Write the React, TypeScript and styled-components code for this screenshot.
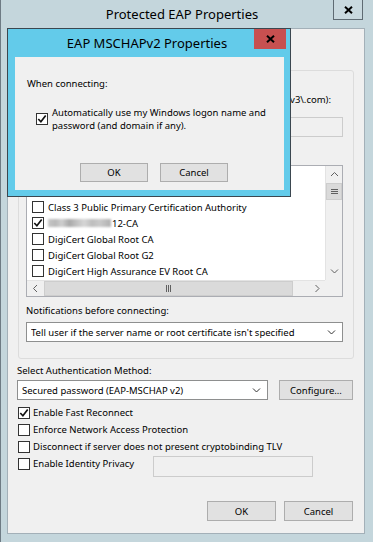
import React from 'react';
import styled, { createGlobalStyle } from 'styled-components';

const Global = createGlobalStyle`
  html, body { margin: 0; padding: 0; }
  body {
    font-family: "Noto Sans", "DejaVu Sans", sans-serif;
    font-size: 9.5px;
    color: #000;
    background: #c4d6dc;
  }
  * { box-sizing: border-box; }
`;

const Window = styled.div`
  position: relative;
  width: 373px;
  height: 542px;
  background: #c4d6dc;
  border-left: 1px solid #6e7b84;
  display: flex;
  flex-direction: column;
  overflow: hidden;
`;

const TitleBar = styled.div<{ $h: number; $pr: number }>`
  display: grid;
  grid-template-columns: 1fr auto 1fr;
  height: ${p => p.$h}px;
  padding-right: ${p => p.$pr}px;
  flex: none;
`;

const TitleText = styled.div`
  grid-column: 2;
  align-self: center;
  font-size: 13px;
  white-space: nowrap;
  color: #000;
`;

const Caption = styled.div<{ $w: number; $bg: string; $border: string }>`
  grid-column: 3;
  justify-self: end;
  align-self: start;
  width: ${p => p.$w}px;
  height: 20px;
  background: ${p => p.$bg};
  border: 1px solid ${p => p.$border};
  border-top: none;
  display: flex;
  align-items: center;
  justify-content: center;
`;

const Client = styled.div`
  flex: 1;
  margin: 0 8px 8px 6px;
  background: #f0f0f0;
  border: 1px solid #a3b0b8;
  display: flex;
  flex-direction: column;
`;

const GroupBox = styled.div`
  margin: 41px 0 0 10px;
  width: 336px;
  height: 289px;
  border: 1px solid #dcdcdc;
  border-radius: 3px;
  padding: 0 10px 0 7px;
  display: flex;
  flex-direction: column;
`;

const Label = styled.div<{ $mt: number; $pl?: number; $right?: number }>`
  margin-top: ${p => p.$mt}px;
  height: 14px;
  line-height: 14px;
  padding-left: ${p => p.$pl ?? 0}px;
  white-space: nowrap;
  ${p => (p.$right !== undefined ? `text-align: right; padding-right: ${p.$right}px;` : '')}
`;

const Spacer = styled.div<{ $mt: number; $h: number }>`
  margin-top: ${p => p.$mt}px;
  height: ${p => p.$h}px;
`;

const TextField = styled.div<{ $mt: number; $h: number }>`
  margin-top: ${p => p.$mt}px;
  height: ${p => p.$h}px;
  background: #f0f0f0;
  border: 1px solid #cccccc;
`;

const ListBox = styled.div`
  margin-top: 8px;
  height: 132px;
  border: 1px solid #abadb3;
  background: #fff;
  display: grid;
  grid-template-columns: 1fr 17px;
  grid-template-rows: 114px 16px;
`;

const Rows = styled.div`
  padding: 1px 0 0 5px;
  overflow: hidden;
  display: flex;
  flex-direction: column;
`;

const Row = styled.div`
  height: 16px;
  display: flex;
  align-items: center;
  gap: 4px;
  white-space: nowrap;
  flex: none;
`;

const Box = styled.span`
  width: 12px;
  height: 12px;
  flex: none;
  border: 1px solid #333;
  background: #fff;
  display: inline-flex;
  align-items: center;
  justify-content: center;
`;

const Blur = styled.span`
  display: inline-block;
  width: 63px;
  height: 8px;
  margin-right: 1px;
  background: linear-gradient(90deg, #c6c6c6 0%, #b9b9b9 12%, #cfcfcf 22%, #a9a9a9 34%, #c2c2c2 46%, #d6d6d6 58%, #bdbdbd 70%, #cacaca 82%, #b0b0b0 100%);
  filter: blur(0.8px);
`;

const VScroll = styled.div`
  background: #f0f0f0;
  border-left: 1px solid #e3e3e3;
  display: flex;
  flex-direction: column;
`;

const ScrollBtn = styled.div<{ $w: number; $h: number }>`
  width: ${p => p.$w}px;
  height: ${p => p.$h}px;
  flex: none;
  display: flex;
  align-items: center;
  justify-content: center;
  background: #f0f0f0;
`;

const Thumb = styled.div<{ $w?: number; $h?: number }>`
  ${p => (p.$w ? `width: ${p.$w}px;` : 'width: 100%;')}
  ${p => (p.$h ? `height: ${p.$h}px;` : 'height: 100%;')}
  flex: none;
  background: #dadada;
  border: 1px solid #cdcdcd;
  display: flex;
  align-items: center;
  justify-content: center;
`;

const Track = styled.div`
  flex: 1;
`;

const HScroll = styled.div`
  background: #f0f0f0;
  border-top: 1px solid #e3e3e3;
  display: flex;
`;

const Corner = styled.div`
  background: #f0f0f0;
`;

const Select = styled.div<{ $mt?: number; $w?: number }>`
  margin-top: ${p => p.$mt ?? 0}px;
  ${p => (p.$w ? `width: ${p.$w}px;` : '')}
  height: 20px;
  background: #fff;
  border: 1px solid #8e8f8f;
  display: flex;
  align-items: center;
  padding: 0 6px 0 4px;
  white-space: nowrap;
  flex: none;
  span { flex: 1; overflow: hidden; }
`;

const AuthRow = styled.div`
  margin-top: 2px;
  padding-left: 9px;
  display: flex;
  gap: 11px;
  height: 20px;
`;

const Button = styled.div<{ $w: number; $h?: number }>`
  width: ${p => p.$w}px;
  height: ${p => p.$h ?? 20}px;
  flex: none;
  background: #e1e1e1;
  border: 1px solid #adadad;
  display: flex;
  align-items: center;
  justify-content: center;
`;

const CheckList = styled.div`
  margin-top: 4px;
  padding-left: 10px;
  display: flex;
  flex-direction: column;
`;

const CheckRow = styled.div`
  height: 17px;
  display: flex;
  align-items: center;
  gap: 3px;
  white-space: nowrap;
`;

const PrivacyRow = styled.div`
  display: grid;
  grid-template-columns: 135px 160px;
  align-items: start;
`;

const ButtonRow = styled.div`
  margin-top: auto;
  margin-bottom: 12px;
  padding-right: 11px;
  display: flex;
  justify-content: flex-end;
  gap: 8px;
`;

const Dialog = styled.div`
  position: absolute;
  left: 6px;
  top: 28px;
  width: 284px;
  height: 169px;
  border: 1px solid #3b4750;
  background: #63cbea;
  display: flex;
  flex-direction: column;
`;

const DialogClient = styled.div`
  flex: 1;
  margin: 0 6px 6px 7px;
  background: #f0f0f0;
  display: flex;
  flex-direction: column;
`;

const DlgLabel = styled.div`
  margin: 20px 0 0 12px;
  height: 14px;
  line-height: 14px;
`;

const DlgCheckRow = styled.div`
  margin: 15px 0 0 21px;
  display: flex;
  align-items: center;
  gap: 4px;
`;

const DlgText = styled.div`
  line-height: 13px;
`;

const DlgButtons = styled.div`
  margin: auto 0 8px 65px;
  display: flex;
  gap: 12px;
`;

const CheckMark = () => (
  <svg width="10" height="10" viewBox="0 0 10 10">
    <polyline points="1.3,5 3.9,7.8 8.7,1.6" fill="none" stroke="#111" strokeWidth="1.7" />
  </svg>
);

const CheckBox = ({ checked }: { checked?: boolean }) => <Box>{checked && <CheckMark />}</Box>;

const CloseX = () => (
  <svg width="9" height="8" viewBox="0 0 9 8">
    <path d="M1 0.8 L8 7.2 M8 0.8 L1 7.2" stroke="#000" strokeWidth="2" />
  </svg>
);

const Chevron = ({ dir, color = '#606060' }: { dir: 'up' | 'down' | 'left' | 'right'; color?: string }) => {
  const pts: Record<string, string> = {
    up: '1,5 4.5,1.5 8,5',
    down: '1,1.5 4.5,5 8,1.5',
    left: '5,1 1.5,4.5 5,8',
    right: '1.5,1 5,4.5 1.5,8',
  };
  const horiz = dir === 'up' || dir === 'down';
  return (
    <svg width={horiz ? 9 : 7} height={horiz ? 7 : 9} viewBox={horiz ? '0 0 9 7' : '0 0 7 9'}>
      <polyline points={pts[dir]} fill="none" stroke={color} strokeWidth="1" />
    </svg>
  );
};

const GripH = () => (
  <svg width="7" height="6" viewBox="0 0 7 6">
    <path d="M0 0.5 H7 M0 2.5 H7 M0 4.5 H7" stroke="#606060" strokeWidth="1" />
  </svg>
);

const GripV = () => (
  <svg width="6" height="7" viewBox="0 0 6 7">
    <path d="M0.5 0 V7 M2.5 0 V7 M4.5 0 V7" stroke="#606060" strokeWidth="1" />
  </svg>
);

const certs: { name: React.ReactNode; checked?: boolean }[] = [
  { name: '' },
  { name: '' },
  { name: 'Class 3 Public Primary Certification Authority' },
  { name: <><Blur />12-CA</>, checked: true },
  { name: 'DigiCert Global Root CA' },
  { name: 'DigiCert Global Root G2' },
  { name: 'DigiCert High Assurance EV Root CA' },
];

export default function App() {
  return (
    <>
      <Global />
      <Window>
        <TitleBar $h={28} $pr={10}>
          <TitleText>Protected EAP Properties</TitleText>
          <Caption $w={30} $bg="#c9d9df" $border="#5f6b73">
            <CloseX />
          </Caption>
        </TitleBar>
        <Client>
          <GroupBox>
            <Label $mt={22} $right={12}>Connect to these servers (examples:srv1;srv2;.*\.srv3\.com):</Label>
            <TextField $mt={10} $h={20} />
            <Spacer $mt={6} $h={14} />
            <ListBox>
              <Rows>
                {certs.map((c, i) => (
                  <Row key={i}>
                    <CheckBox checked={c.checked} />
                    <span>{c.name}</span>
                  </Row>
                ))}
              </Rows>
              <VScroll>
                <ScrollBtn $w={16} $h={17}><Chevron dir="up" /></ScrollBtn>
                <Thumb $h={17}><GripH /></Thumb>
                <Track />
                <ScrollBtn $w={16} $h={17}><Chevron dir="down" /></ScrollBtn>
              </VScroll>
              <HScroll>
                <ScrollBtn $w={17} $h={15}><Chevron dir="left" /></ScrollBtn>
                <Thumb $w={249}><GripV /></Thumb>
                <Track />
                <ScrollBtn $w={16} $h={15}><Chevron dir="right" /></ScrollBtn>
              </HScroll>
              <Corner />
            </ListBox>
            <Label $mt={7}>Notifications before connecting:</Label>
            <Select $mt={4}>
              <span>Tell user if the server name or root certificate isn't specified</span>
              <Chevron dir="down" color="#333" />
            </Select>
          </GroupBox>
          <Label $mt={5} $pl={9}>Select Authentication Method:</Label>
          <AuthRow>
            <Select $w={251}>
              <span>Secured password (EAP-MSCHAP v2)</span>
              <Chevron dir="down" color="#333" />
            </Select>
            <Button $w={74}>Configure...</Button>
          </AuthRow>
          <CheckList>
            <CheckRow><CheckBox checked />Enable Fast Reconnect</CheckRow>
            <CheckRow><CheckBox />Enforce Network Access Protection</CheckRow>
            <CheckRow><CheckBox />Disconnect if server does not present cryptobinding TLV</CheckRow>
            <PrivacyRow>
              <CheckRow><CheckBox />Enable Identity Privacy</CheckRow>
              <TextField $mt={1} $h={21} />
            </PrivacyRow>
          </CheckList>
          <ButtonRow>
            <Button $w={69}>OK</Button>
            <Button $w={69}>Cancel</Button>
          </ButtonRow>
        </Client>
        <Dialog>
          <TitleBar $h={28} $pr={4}>
            <TitleText>EAP MSCHAPv2 Properties</TitleText>
            <Caption $w={32} $bg="#c75050" $border="#c75050">
              <CloseX />
            </Caption>
          </TitleBar>
          <DialogClient>
            <DlgLabel>When connecting:</DlgLabel>
            <DlgCheckRow>
              <CheckBox checked />
              <DlgText>
                Automatically use my Windows logon name and
                <br />
                password (and domain if any).
              </DlgText>
            </DlgCheckRow>
            <DlgButtons>
              <Button $w={68} $h={19}>OK</Button>
              <Button $w={68} $h={19}>Cancel</Button>
            </DlgButtons>
          </DialogClient>
        </Dialog>
      </Window>
    </>
  );
}
